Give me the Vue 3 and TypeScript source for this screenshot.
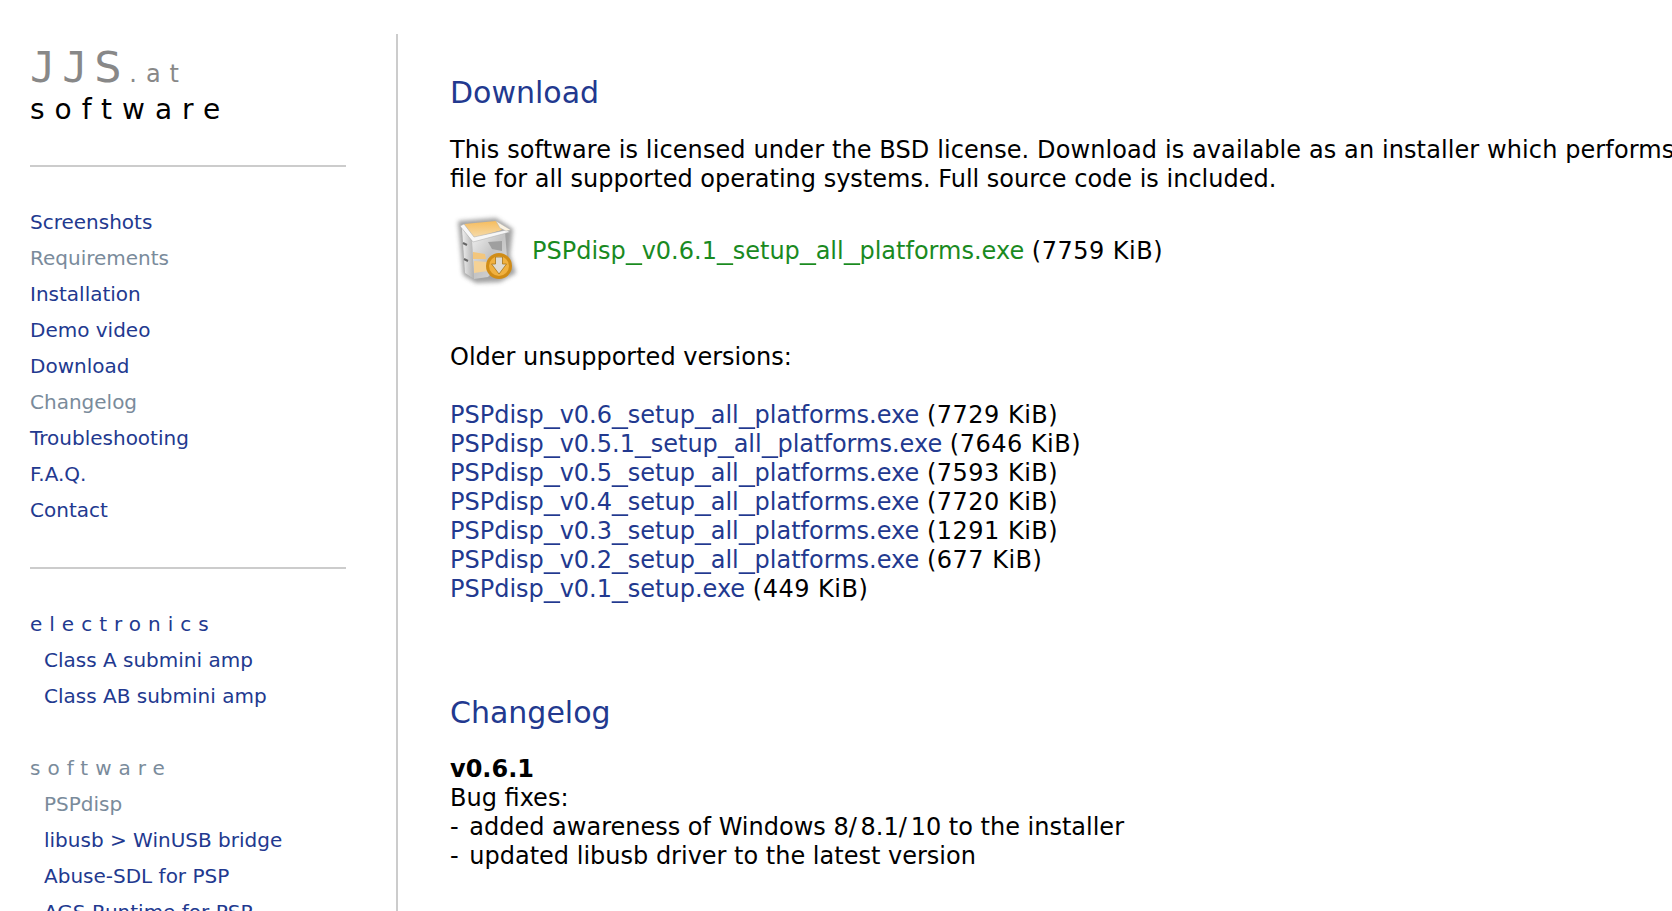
<script setup lang="ts">
const mainLinks = [
  { label: 'Screenshots' },
  { label: 'Requirements', muted: true },
  { label: 'Installation' },
  { label: 'Demo video' },
  { label: 'Download' },
  { label: 'Changelog', muted: true },
  { label: 'Troubleshooting' },
  { label: 'F.A.Q.' },
  { label: 'Contact' }
]

const electronics = ['Class A submini amp', 'Class AB submini amp']

const softwareLinks = [
  { label: 'PSPdisp', muted: true },
  { label: 'libusb > WinUSB bridge' },
  { label: 'Abuse-SDL for PSP' },
  { label: 'AGS Runtime for PSP' }
]

const olderVersions = [
  { file: 'PSPdisp_v0.6_setup_all_platforms.exe', size: '7729 KiB' },
  { file: 'PSPdisp_v0.5.1_setup_all_platforms.exe', size: '7646 KiB' },
  { file: 'PSPdisp_v0.5_setup_all_platforms.exe', size: '7593 KiB' },
  { file: 'PSPdisp_v0.4_setup_all_platforms.exe', size: '7720 KiB' },
  { file: 'PSPdisp_v0.3_setup_all_platforms.exe', size: '1291 KiB' },
  { file: 'PSPdisp_v0.2_setup_all_platforms.exe', size: '677 KiB' },
  { file: 'PSPdisp_v0.1_setup.exe', size: '449 KiB' }
]

// the underscores in the file names run wider than the font draws them
const fileParts = (file: string) => file.split('_')
</script>

<template>
  <div class="page">
    <aside class="sidebar">
      <div class="logo">
        <div class="logo-top"><span class="logo-j">JJ</span>S<span class="logo-tld">.at</span></div>
        <div class="logo-sub">software</div>
      </div>
      <hr class="rule rule-top" />
      <nav class="nav">
        <a v-for="link in mainLinks" :key="link.label" :class="{ muted: link.muted }">{{ link.label }}</a>
      </nav>
      <hr class="rule rule-bottom" />
      <nav class="nav">
        <div class="group">electronics</div>
        <a v-for="item in electronics" :key="item" class="sub">{{ item }}</a>
        <div class="group group-muted">software</div>
        <a
          v-for="link in softwareLinks"
          :key="link.label"
          class="sub"
          :class="{ muted: link.muted }"
        >{{ link.label }}</a>
      </nav>
    </aside>

    <main class="content">
      <h2 class="first">Download</h2>
      <p class="intro">
        <span class="line-one">This software is licensed under the BSD license. Download is available as an installer which performs the setup of the driver and the server</span><br />
        file for all supported operating systems. Full source code is included.
      </p>
      <div class="current">
        <svg class="box-icon" width="80" height="80" viewBox="0 0 80 80">
          <defs>
            <linearGradient id="side" x1="0" y1="0" x2="1" y2="0">
              <stop offset="0" stop-color="#efefef" />
              <stop offset="1" stop-color="#b0b0b0" />
            </linearGradient>
            <linearGradient id="front" x1="0" y1="0" x2="1" y2="1">
              <stop offset="0" stop-color="#f2f2f2" />
              <stop offset="0.5" stop-color="#c4c4c4" />
              <stop offset="1" stop-color="#dedede" />
            </linearGradient>
            <linearGradient id="flap" x1="0" y1="0" x2="0" y2="1">
              <stop offset="0" stop-color="#f6bd5e" />
              <stop offset="1" stop-color="#f5dcae" />
            </linearGradient>
            <filter id="blur" x="-30%" y="-30%" width="160%" height="160%">
              <feGaussianBlur stdDeviation="2" />
            </filter>
            <filter id="soft" x="-5%" y="-5%" width="110%" height="110%">
              <feGaussianBlur stdDeviation="0.5" />
            </filter>
          </defs>
          <path d="M8 10 L46 7 L63 18 L60 44 L66 62 L50 71 L26 72 L13 64 Z" fill="#444" opacity="0.5" filter="url(#blur)" />
          <g filter="url(#soft)">
            <path d="M12 17 L22 30 L24 68 L15 62 Z" fill="url(#side)" />
            <path d="M22 30 L55 21 L57 46 L38 66 L24 68 Z" fill="url(#front)" />
            <path d="M23 41 L35 43 L36 48 L23 48 Z" fill="#f3c67c" />
            <path d="M24 50 L38 51 L38 60 L24 62 Z" fill="#f5d296" />
            <path d="M38 31 L52 30 L52 40 L42 38 Z" fill="#9f9f9f" />
            <path d="M14 13 L46 10 L52 19 L24 27 Z" fill="url(#flap)" />
            <path d="M10 15 L14 13 L24 26 L56 19 L60 21 L23 31 Z" fill="#f7f7f7" stroke="#a8a8a8" stroke-width="0.5" />
            <path d="M46 10 L61 19 L56 20 L50 17 Z" fill="#fbf3e2" stroke="#b5b5b5" stroke-width="0.5" />
            <path d="M13 32 L17 34 M14 48 L18 50" stroke="#666" stroke-width="2" />
            <circle cx="49" cy="55" r="13" fill="#d08c18" />
            <circle cx="49" cy="55" r="10" fill="#f0b13f" />
            <path d="M45.5 46 H52.5 V53 H56.5 L49 63 L41.5 53 H45.5 Z" fill="#dedbd3" stroke="#a87515" stroke-width="0.8" />
          </g>
        </svg>
        <div>
          <a class="link-current">
            <template v-for="(part, i) in fileParts('PSPdisp_v0.6.1_setup_all_platforms.exe')" :key="i"><span v-if="i > 0" class="us">_</span>{{ part }}</template>
          </a> <span class="size">(7759 KiB)</span>
        </div>
      </div>
      <p class="older">Older unsupported versions:</p>
      <div class="versions">
        <div v-for="version in olderVersions" :key="version.file">
          <a>
            <template v-for="(part, i) in fileParts(version.file)" :key="i"><span v-if="i > 0" class="us">_</span>{{ part }}</template>
          </a> <span class="size">({{ version.size }})</span>
        </div>
      </div>
      <h2 class="changelog">Changelog</h2>
      <div class="entry">
        <strong>v0.6.1</strong>
        <div>Bug fixes:</div>
        <div><span class="dash">-</span> added awareness of Windows 8<span class="slash">/</span>8.1<span class="slash">/</span>10 to the installer</div>
        <div><span class="dash">-</span> updated libusb driver to the latest version</div>
      </div>
    </main>
  </div>
</template>

<style scoped>
.page {
  display: flex;
  align-items: stretch;
  height: 911px;
  overflow: hidden;
  background: #fff;
  color: #000;
  font-family: "DejaVu Sans", Verdana, sans-serif;
}

.sidebar {
  flex: none;
  width: 396px;
  box-sizing: border-box;
  padding: 48px 50px 0 30px;
  overflow: hidden;
}

.logo-top {
  font-size: 42px;
  line-height: 40px;
  letter-spacing: 8px;
  color: #888;
  white-space: nowrap;
}

.logo-j {
  font-family: "DejaVu Sans Mono", monospace;
  letter-spacing: 7px;
}

.logo-tld {
  font-size: 24px;
  letter-spacing: 9px;
}

.logo-sub {
  font-size: 28px;
  line-height: 32px;
  letter-spacing: 10px;
  color: #000;
}

.rule {
  height: 2px;
  margin: 0;
  border: 0;
  background: #ccc;
}

.rule-top {
  margin-top: 39px;
  margin-bottom: 37px;
}

.rule-bottom {
  margin-top: 39px;
  margin-bottom: 37px;
}

.nav {
  display: flex;
  flex-direction: column;
  font-size: 20px;
  line-height: 36px;
  color: #22398f;
  white-space: nowrap;
}

.nav .muted {
  color: #7a8b9b;
}

.sub {
  padding-left: 14px;
}

.group {
  letter-spacing: 7px;
}

.group-muted {
  margin-top: 36px;
  color: #7a8b9b;
}

.content {
  flex: none;
  width: 1700px;
  margin-top: 34px;
  box-sizing: border-box;
  padding: 0 0 0 52px;
  border-left: 2px solid #ccc;
  font-size: 24px;
  line-height: 29px;
  white-space: nowrap;
}

h2 {
  margin: 0;
  font-size: 30px;
  line-height: 36px;
  font-weight: 400;
  color: #22398f;
}

h2.first {
  margin-top: 41px;
}

p {
  margin: 0;
}

.intro {
  margin-top: 25px;
}

.line-one {
  letter-spacing: 0.1px;
}

.current {
  display: flex;
  align-items: center;
  gap: 2px;
  margin-top: 17px;
}

.box-icon {
  display: block;
  flex: none;
}

.link-current {
  color: #1a8a1f;
}

.us {
  display: inline-block;
  width: 15.8px;
  transform: scaleX(1.32);
  transform-origin: left;
}

.size {
  letter-spacing: 0.5px;
}

.dash {
  letter-spacing: 3px;
}

.slash {
  letter-spacing: 3.8px;
}

.older {
  margin-top: 52px;
}

.versions {
  margin-top: 29px;
}

.versions a {
  color: #22398f;
}

.changelog {
  margin-top: 91px;
}

.entry {
  margin-top: 24px;
}

.entry strong {
  display: block;
}
</style>

<style>
html,
body {
  margin: 0;
  overflow: hidden;
}
</style>
